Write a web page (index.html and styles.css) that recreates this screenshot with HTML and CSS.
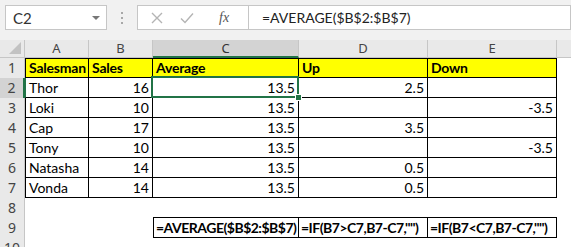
FILE: index.html
```html
<!DOCTYPE html>
<html>
<head>
    <title>Average Up Down</title>
    <link rel="stylesheet" href="styles.css">
</head>
<body>
    <div class="excel">
        <div class="ribbon">
            <div class="namebox">
                <span>C2</span>
                <span class="caret"></span>
            </div>
            <div class="grip"><i></i><i></i><i></i></div>
            <div class="fx-buttons">
                <svg width="12" height="12" viewBox="0 0 12 12"><path d="M1 1 L11 11 M11 1 L1 11" stroke="#b4b4b4" stroke-width="1.4" fill="none"/></svg>
                <svg width="14" height="12" viewBox="0 0 14 12"><path d="M1 6.5 L5 10.5 L13 1.5" stroke="#b4b4b4" stroke-width="1.4" fill="none"/></svg>
                <span class="fx">fx</span>
            </div>
            <div class="formula">=AVERAGE($B$2:$B$7)</div>
        </div>

        <div class="sheet">
            <!-- column headers -->
            <div class="corner"><span class="tri"></span></div>
            <div class="ch">A</div>
            <div class="ch">B</div>
            <div class="ch sel-col">C</div>
            <div class="ch">D</div>
            <div class="ch">E</div>
            <div class="ch last"></div>

            <!-- row 1 -->
            <div class="rh">1</div>
            <div class="cell b bl bt hd">Salesman</div>
            <div class="cell b bt hd">Sales</div>
            <div class="cell b bt hd">Average</div>
            <div class="cell b bt hd">Up</div>
            <div class="cell b bt hd">Down</div>
            <div class="cell"></div>

            <!-- row 2 -->
            <div class="rh sel-row">2</div>
            <div class="cell b bl green-left">Thor</div>
            <div class="cell b num">16</div>
            <div class="cell b num active">13.5<span class="handle"></span></div>
            <div class="cell b num">2.5</div>
            <div class="cell b"></div>
            <div class="cell"></div>

            <!-- row 3 -->
            <div class="rh">3</div>
            <div class="cell b bl">Loki</div>
            <div class="cell b num">10</div>
            <div class="cell b num">13.5</div>
            <div class="cell b"></div>
            <div class="cell b num">-3.5</div>
            <div class="cell"></div>

            <!-- row 4 -->
            <div class="rh">4</div>
            <div class="cell b bl">Cap</div>
            <div class="cell b num">17</div>
            <div class="cell b num">13.5</div>
            <div class="cell b num">3.5</div>
            <div class="cell b"></div>
            <div class="cell"></div>

            <!-- row 5 -->
            <div class="rh">5</div>
            <div class="cell b bl">Tony</div>
            <div class="cell b num">10</div>
            <div class="cell b num">13.5</div>
            <div class="cell b"></div>
            <div class="cell b num">-3.5</div>
            <div class="cell"></div>

            <!-- row 6 -->
            <div class="rh">6</div>
            <div class="cell b bl">Natasha</div>
            <div class="cell b num">14</div>
            <div class="cell b num">13.5</div>
            <div class="cell b num">0.5</div>
            <div class="cell b"></div>
            <div class="cell"></div>

            <!-- row 7 -->
            <div class="rh">7</div>
            <div class="cell b bl">Vonda</div>
            <div class="cell b num">14</div>
            <div class="cell b num">13.5</div>
            <div class="cell b num">0.5</div>
            <div class="cell b"></div>
            <div class="cell"></div>

            <!-- row 8 -->
            <div class="rh">8</div>
            <div class="cell"></div>
            <div class="cell"></div>
            <div class="cell bb"></div>
            <div class="cell bb"></div>
            <div class="cell bb"></div>
            <div class="cell"></div>

            <!-- row 9 : formulas -->
            <div class="rh">9</div>
            <div class="cell"></div>
            <div class="cell"></div>
            <div class="cell b bl f">=AVERAGE($B$2:$B$7)</div>
            <div class="cell b f">=IF(B7&gt;C7,B7-C7,"")</div>
            <div class="cell b f">=IF(B7&lt;C7,B7-C7,"")</div>
            <div class="cell"></div>

            <!-- row 10 -->
            <div class="rh">10</div>
            <div class="cell"></div>
            <div class="cell"></div>
            <div class="cell"></div>
            <div class="cell"></div>
            <div class="cell"></div>
            <div class="cell"></div>
        </div>
    </div>
</body>
</html>
```

FILE: styles.css
```css
body {
    margin: 0;
    padding: 0;
    background: #ffffff;
    font-family: 'Lato', 'Liberation Sans', sans-serif;
}

.excel {
    width: 571px;
    height: 247px;
    overflow: hidden;
}

/* formula bar */
.ribbon {
    height: 40px;
    box-sizing: border-box;
    padding-top: 5px;
    padding-left: 5px;
    background: #f1f1f1;
    display: flex;
    align-items: flex-start;
}

.namebox {
    width: 102px;
    height: 25px;
    box-sizing: border-box;
    background: #fff;
    border: 1px solid #c6c6c6;
    display: flex;
    align-items: center;
    justify-content: space-between;
    padding: 0 6px 0 7px;
    font-family: 'Lato', sans-serif;
    font-size: 15px;
    color: #333;
}

.caret {
    width: 0;
    height: 0;
    border-left: 4px solid transparent;
    border-right: 4px solid transparent;
    border-top: 4px solid #777;
}

.grip {
    width: 30px;
    height: 25px;
    display: flex;
    flex-direction: column;
    align-items: center;
    justify-content: center;
    gap: 3px;
}

.grip i {
    width: 2px;
    height: 2px;
    background: #a8a8a8;
}

.fx-buttons {
    width: 111px;
    height: 25px;
    box-sizing: border-box;
    background: #fff;
    border: 1px solid #c6c6c6;
    border-right: none;
    display: flex;
    align-items: center;
    padding-left: 13px;
    gap: 17px;
}

.fx {
    font-family: 'Liberation Serif', serif;
    font-style: italic;
    font-size: 14px;
    color: #555;
    margin-left: 8px;
}

.formula {
    flex: 1;
    height: 25px;
    box-sizing: border-box;
    background: #fff;
    border: 1px solid #c6c6c6;
    padding-left: 13px;
    font-family: 'Lato', sans-serif;
    font-size: 14px;
    line-height: 23px;
    color: #222;
}

/* sheet grid */
.sheet {
    display: grid;
    grid-template-columns: 25px 64px 64px 146px 129px 129px 14px;
    grid-template-rows: 18px repeat(9, 20px) 20px;
}

.corner {
    background: #e9e9e9;
    border-right: 1px solid #c6c6c6;
    border-bottom: 1px solid #c6c6c6;
    box-sizing: border-box;
    position: relative;
}

.tri {
    position: absolute;
    right: 3px;
    bottom: 3px;
    width: 0;
    height: 0;
    border-left: 12px solid transparent;
    border-bottom: 12px solid #c2c2c2;
}

.ch {
    background: #e9e9e9;
    border-right: 1px solid #c6c6c6;
    border-bottom: 1px solid #c6c6c6;
    box-sizing: border-box;
    text-align: center;
    font-family: 'Noto Sans', 'Open Sans', sans-serif;
    font-size: 13px;
    line-height: 17px;
    color: #444;
}

.ch.last {
    border-right: none;
}

.ch.sel-col {
    background: #d3d3d3;
    border-bottom: 2px solid #217346;
    color: #333;
}

.rh {
    background: #e9e9e9;
    border-right: 1px solid #c6c6c6;
    box-sizing: border-box;
    text-align: center;
    font-family: 'Noto Sans', 'Open Sans', sans-serif;
    font-size: 14px;
    line-height: 20px;
    color: #444;
}

.rh.sel-row {
    background: #d3d3d3;
    border-right: 2px solid #217346;
}

.cell {
    box-sizing: border-box;
    padding: 0 3px;
    font-size: 14px;
    line-height: 19px;
    color: #000;
    white-space: nowrap;
    overflow: visible;
}

.b {
    border-right: 1px solid #000;
    border-bottom: 1px solid #000;
}

.bl {
    border-left: 1px solid #000;
}

.bt {
    border-top: 1px solid #000;
    line-height: 18px;
}

.bb {
    border-bottom: 1px solid #000;
}

.green-left {
    border-left-color: #217346;
}

.hd {
    background: #ffff00;
    font-weight: bold;
    letter-spacing: -0.2px;
}

.num {
    text-align: right;
}

.f {
    font-weight: bold;
    padding: 0 2px;
    letter-spacing: -0.5px;
}

/* active cell C2 */
.active {
    position: relative;
}

.active::after {
    content: "";
    position: absolute;
    left: -2px;
    top: -2px;
    right: -1px;
    bottom: -1px;
    border: 2px solid #217346;
}

.handle {
    position: absolute;
    right: -4px;
    bottom: -4px;
    width: 5px;
    height: 5px;
    background: #217346;
    border: 1px solid #fff;
    z-index: 1;
}
```
